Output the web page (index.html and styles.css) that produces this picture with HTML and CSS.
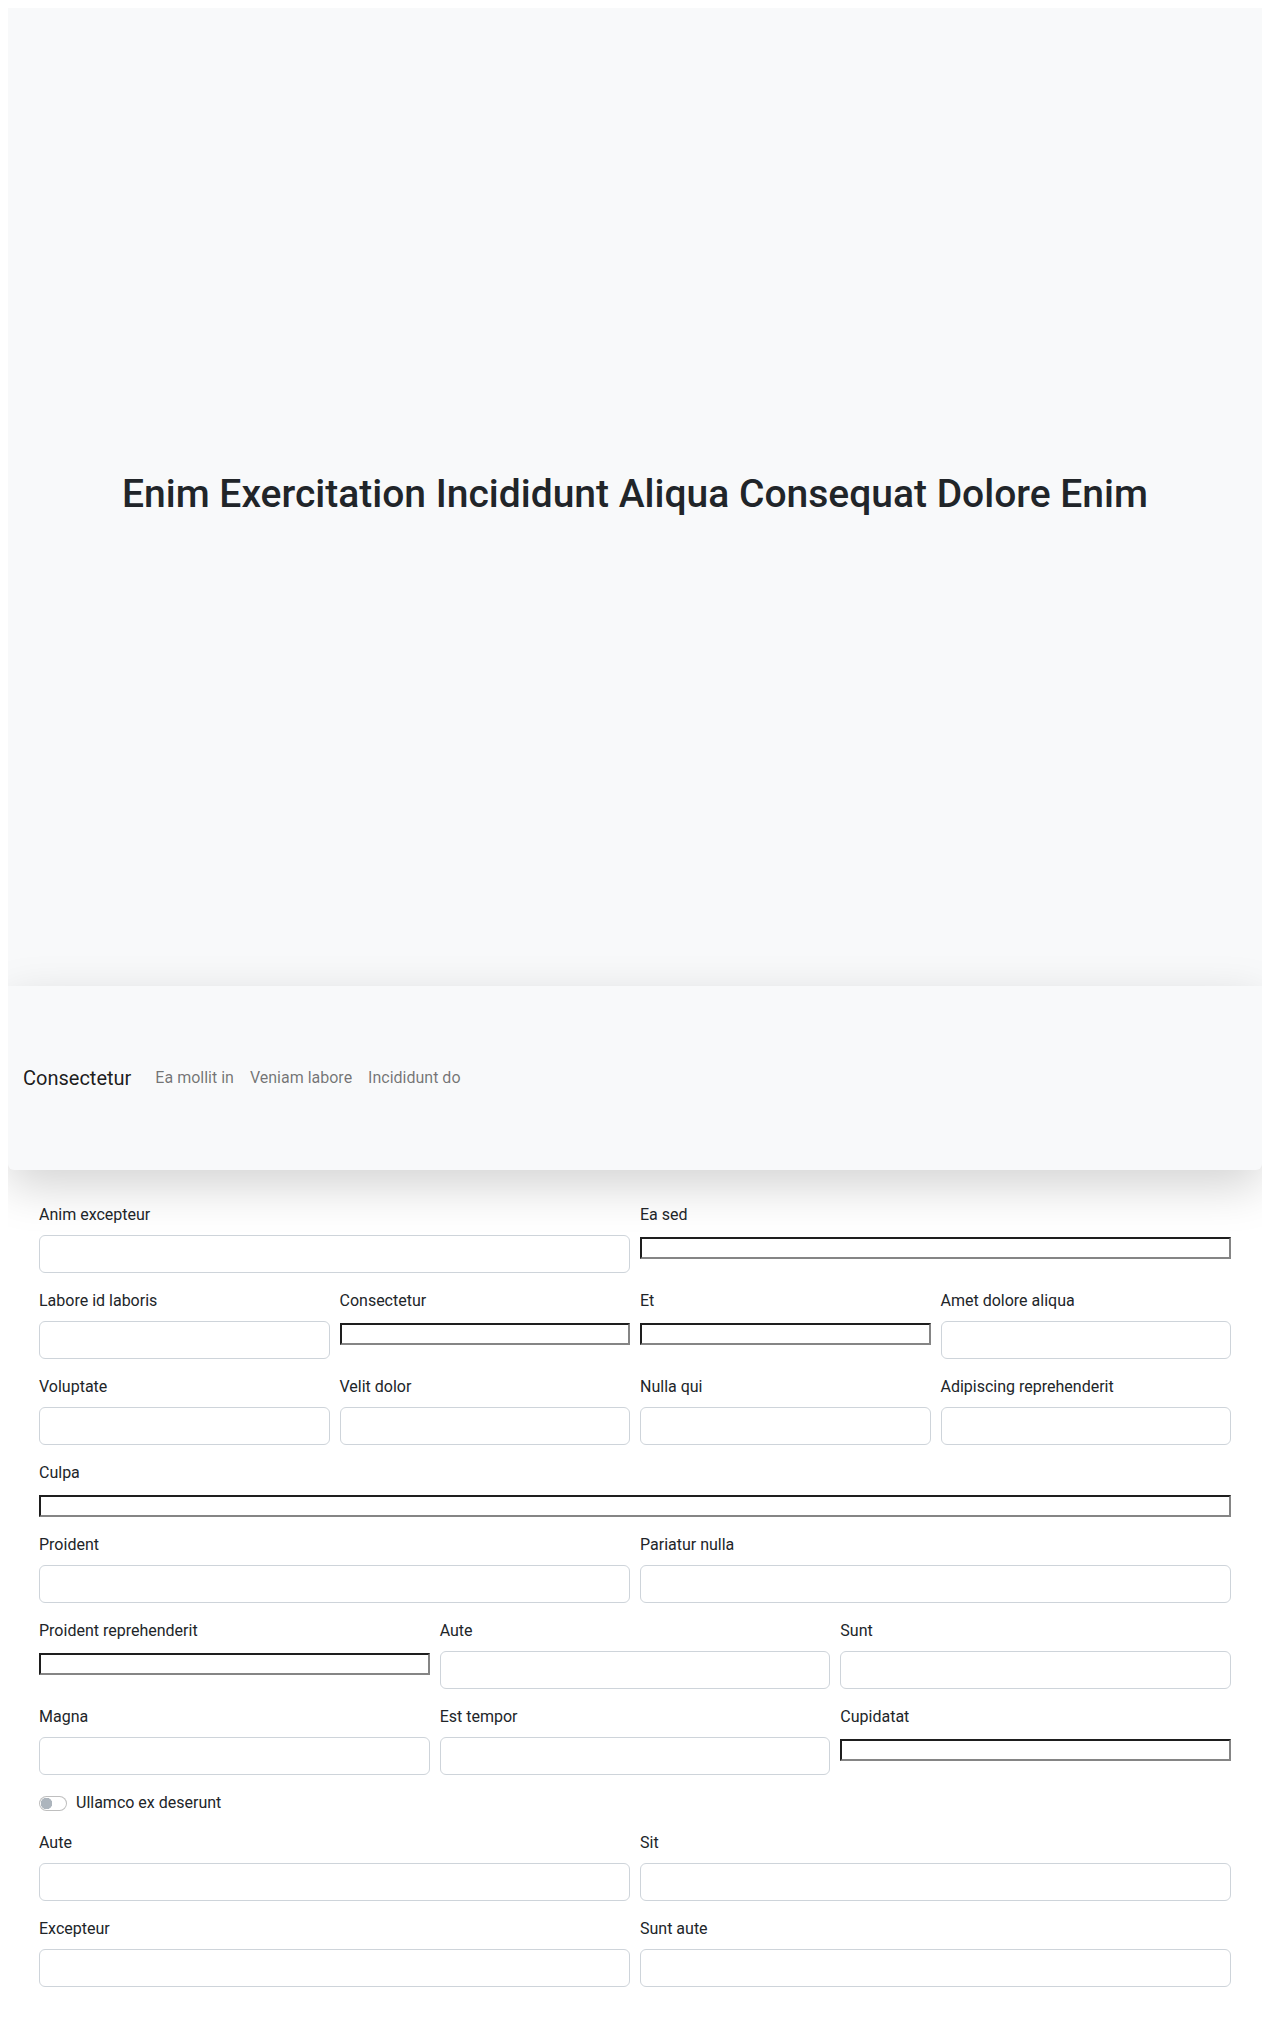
FILE: index.html
```html
<!DOCTYPE html>
<html lang="la">
<head>
<meta charset="utf-8">
<title>Enim Exercitation</title>
<link rel="stylesheet" href="styles.css">
</head>
<body>
<header class="hero">
  <h1 class="hero-title">Enim Exercitation Incididunt Aliqua Consequat Dolore Enim</h1>
</header>
<nav class="navbar">
  <a class="brand" href="#">Consectetur</a>
  <ul class="nav">
    <li><a class="nav-link" href="#">Ea mollit in</a></li>
    <li><a class="nav-link" href="#">Veniam labore</a></li>
    <li><a class="nav-link" href="#">Incididunt do</a></li>
  </ul>
</nav>
<form class="form">
  <div class="row cols-2">
    <div class="field"><label class="label">Anim excepteur</label><input class="control" type="text"></div>
    <div class="field"><label class="label">Ea sed</label><input class="native" type="text"></div>
  </div>
  <div class="row cols-4">
    <div class="field"><label class="label">Labore id laboris</label><input class="control" type="text"></div>
    <div class="field"><label class="label">Consectetur</label><input class="native" type="text"></div>
    <div class="field"><label class="label">Et</label><input class="native" type="text"></div>
    <div class="field"><label class="label">Amet dolore aliqua</label><input class="control" type="text"></div>
  </div>
  <div class="row cols-4">
    <div class="field"><label class="label">Voluptate</label><input class="control" type="text"></div>
    <div class="field"><label class="label">Velit dolor</label><input class="control" type="text"></div>
    <div class="field"><label class="label">Nulla qui</label><input class="control" type="text"></div>
    <div class="field"><label class="label">Adipiscing reprehenderit</label><input class="control" type="text"></div>
  </div>
  <div class="row cols-1">
    <div class="field"><label class="label">Culpa</label><input class="native" type="text"></div>
  </div>
  <div class="row cols-2">
    <div class="field"><label class="label">Proident</label><input class="control" type="text"></div>
    <div class="field"><label class="label">Pariatur nulla</label><input class="control" type="text"></div>
  </div>
  <div class="row cols-3">
    <div class="field"><label class="label">Proident reprehenderit</label><input class="native" type="text"></div>
    <div class="field"><label class="label">Aute</label><input class="control" type="text"></div>
    <div class="field"><label class="label">Sunt</label><input class="control" type="text"></div>
  </div>
  <div class="row cols-3">
    <div class="field"><label class="label">Magna</label><input class="control" type="text"></div>
    <div class="field"><label class="label">Est tempor</label><input class="control" type="text"></div>
    <div class="field"><label class="label">Cupidatat</label><input class="native" type="text"></div>
  </div>
  <div class="switch-row">
    <input class="switch" type="checkbox" id="sw">
    <label class="switch-label" for="sw">Ullamco ex deserunt</label>
  </div>
  <div class="row cols-2">
    <div class="field"><label class="label">Aute</label><input class="control" type="text"></div>
    <div class="field"><label class="label">Sit</label><input class="control" type="text"></div>
  </div>
  <div class="row cols-2">
    <div class="field"><label class="label">Excepteur</label><input class="control" type="text"></div>
    <div class="field"><label class="label">Sunt aute</label><input class="control" type="text"></div>
  </div>
</form>
</body>
</html>
```
FILE: styles.css
```css
body {
  margin: 8px;
  font-family: Roboto, "Liberation Sans", Arial, sans-serif;
  font-size: 16px;
  line-height: 1.5;
  color: #212529;
  background: #fff;
}

.hero {
  height: 978px;
  background: #f8f9fa;
  box-shadow: 0 1rem 3rem rgba(0, 0, 0, .175);
  display: flex;
  align-items: center;
  justify-content: center;
}

.hero-title {
  margin: 0 0 6px;
  font-size: 39px;
  font-weight: 500;
  line-height: 1.2;
  color: #212529;
}

.navbar {
  height: 184px;
  box-sizing: border-box;
  padding: 0 15px;
  background: #f8f9fa;
  box-shadow: 0 1rem 3rem rgba(0, 0, 0, .175);
  border-radius: 0 0 6px 6px;
  display: flex;
  align-items: center;
}

.brand {
  font-size: 20px;
  line-height: 30px;
  padding: 5px 0;
  margin-right: 16px;
  color: rgba(0, 0, 0, .9);
  text-decoration: none;
}

.nav {
  list-style: none;
  margin: 0;
  padding: 0;
  display: flex;
}

.nav-link {
  display: block;
  padding: 8px;
  color: rgba(0, 0, 0, .55);
  text-decoration: none;
}

.form {
  margin-top: 33px;
  padding: 0 31px;
}

.row {
  display: grid;
  column-gap: 10px;
}

.cols-1 { grid-template-columns: 1fr; }
.cols-2 { grid-template-columns: repeat(2, 1fr); }
.cols-3 { grid-template-columns: repeat(3, 1fr); }
.cols-4 { grid-template-columns: repeat(4, 1fr); }

.field {
  margin-bottom: 16px;
  min-width: 0;
}

.label {
  display: block;
  margin-bottom: 8px;
}

.control {
  display: block;
  box-sizing: border-box;
  width: 100%;
  height: 38px;
  padding: 6px 12px;
  margin: 0;
  font: inherit;
  background: #fff;
  border: 1px solid #ced4da;
  border-radius: 6px;
}

.native {
  box-sizing: border-box;
  width: 100%;
  height: 22px;
  margin: 0;
  padding: 1px 2px;
  font-family: inherit;
  font-size: 13.33px;
  background: #fff;
  border-width: 2px;
  border-style: solid;
  border-color: #1e1e1e #858585 #858585 #1e1e1e;
  border-radius: 0;
}

.switch-row {
  display: flex;
  align-items: center;
  min-height: 24px;
  margin-bottom: 16px;
}

.switch {
  appearance: none;
  -webkit-appearance: none;
  box-sizing: border-box;
  width: 28px;
  height: 15px;
  margin: 0 9px 0 0;
  border: 1px solid rgba(0, 0, 0, .25);
  border-radius: 8px;
  background: #fff radial-gradient(circle at 6.5px 50%, #adb5bd 0, #adb5bd 5.5px, transparent 6px);
}

.switch-label {
  line-height: 24px;
}
```
